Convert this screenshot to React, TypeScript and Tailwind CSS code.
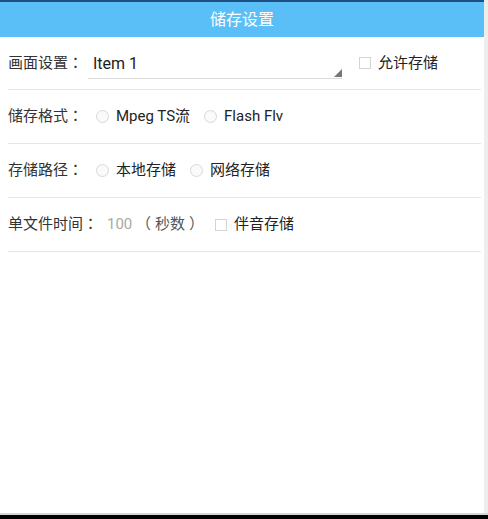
import React, { useState } from "react";

const font = { fontFamily: "Roboto, 'Noto Sans CJK TC', sans-serif" };

function Radio({ label, checked, onClick }: { label: string; checked: boolean; onClick: () => void }) {
  return (
    <button onClick={onClick} className="flex items-center gap-[7px]">
      <span className="w-[13px] h-[13px] rounded-full border border-[#d8d8d8] bg-[#fafafa] flex items-center justify-center">
        {checked && <span className="w-[7px] h-[7px] rounded-full bg-[#5bbff7]" />}
      </span>
      <span className="text-[15px] text-[#222]">{label}</span>
    </button>
  );
}

function Check({ label, checked, onClick }: { label: string; checked: boolean; onClick: () => void }) {
  return (
    <button onClick={onClick} className="flex items-center gap-[7px]">
      <span className="w-[12px] h-[12px] border border-[#d4d4d4] bg-white flex items-center justify-center text-[9px] text-[#5bbff7]">
        {checked ? "✓" : ""}
      </span>
      <span className="text-[15px] text-[#222]">{label}</span>
    </button>
  );
}

export default function App() {
  const [allow, setAllow] = useState(false);
  const [audio, setAudio] = useState(false);
  const [format, setFormat] = useState("");
  const [path, setPath] = useState("");

  return (
    <div className="h-[519px] w-[488px] flex flex-col bg-white overflow-hidden" style={font}>
      <div className="flex-1 flex min-h-0">
        <div className="flex-1 flex flex-col">
          <header className="h-[37px] border-t-2 border-[#1d4f80] bg-[#5bbff7] flex items-center justify-center">
            <h1 className="text-[16px] text-white">储存设置</h1>
          </header>

          <div className="pl-2 pr-[3px]">
            <div className="h-[53px] flex items-center border-b border-[#e6e6e6]">
              <span className="text-[15px] text-[#333] w-[80px] shrink-0">画面设置：</span>
              <div className="relative w-[254px] h-[32px] border-b border-[#dcdcdc] flex items-center pl-[5px] pt-[3px]">
                <span className="text-[16px] text-[#1a1a1a]">Item 1</span>
                <span className="absolute right-0 bottom-[1px] w-0 h-0 border-l-[8px] border-l-transparent border-b-[8px] border-b-[#777]" />
              </div>
              <div className="ml-[17px]">
                <Check label="允许存储" checked={allow} onClick={() => setAllow(!allow)} />
              </div>
            </div>

            <div className="h-[54px] flex items-center border-b border-[#e6e6e6]">
              <span className="text-[15px] text-[#333] w-[88px] shrink-0">储存格式：</span>
              <div className="flex items-center gap-[14px]">
                <Radio label="Mpeg TS流" checked={format === "ts"} onClick={() => setFormat("ts")} />
                <Radio label="Flash Flv" checked={format === "flv"} onClick={() => setFormat("flv")} />
              </div>
            </div>

            <div className="h-[54px] flex items-center border-b border-[#e6e6e6]">
              <span className="text-[15px] text-[#333] w-[88px] shrink-0">存储路径：</span>
              <div className="flex items-center gap-[14px]">
                <Radio label="本地存储" checked={path === "local"} onClick={() => setPath("local")} />
                <Radio label="网络存储" checked={path === "net"} onClick={() => setPath("net")} />
              </div>
            </div>

            <div className="h-[54px] flex items-center border-b border-[#e6e6e6]">
              <span className="text-[15px] text-[#333] w-[99px] shrink-0">单文件时间：</span>
              <span className="text-[15px] text-[#a8a8a8] w-[29px]">100</span>
              <span className="text-[15px] text-[#555] w-[79px] flex">
                <span>（</span>
                <span className="mx-[4px]">秒数</span>
                <span>）</span>
              </span>
              <Check label="伴音存储" checked={audio} onClick={() => setAudio(!audio)} />
            </div>
          </div>
        </div>
        <div className="w-[4px] bg-[#ededed]" />
      </div>
      <div className="h-[2px] bg-[#d6d6d6]" />
      <div className="h-[4px] bg-black" />
    </div>
  );
}
